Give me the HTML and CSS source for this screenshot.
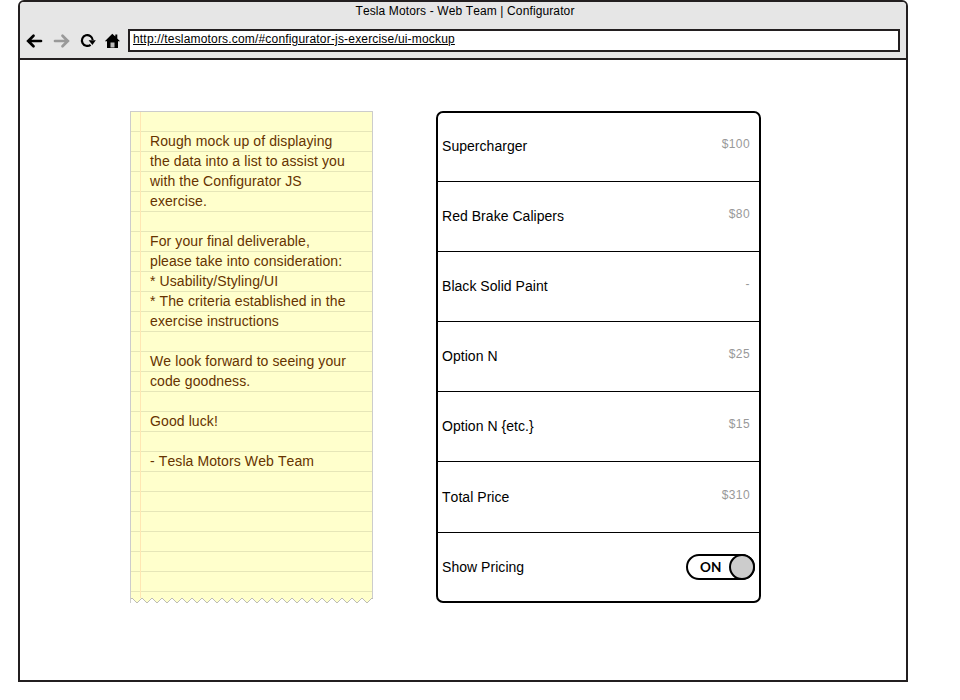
FILE: index.html
```
<!DOCTYPE html>
<html lang="en">
<head>
<meta charset="utf-8">
<title>Tesla Motors - Web Team | Configurator</title>
<link rel="stylesheet" href="styles.css">
</head>
<body>
<div class="window">
  <header class="chrome">
    <div class="title">Tesla Motors - Web Team | Configurator</div>
    <div class="toolbar">
      <svg class="nav" width="104" height="23" viewBox="0 0 104 23" fill="none" stroke-linecap="round">
        <path d="M13.500 6.800 8.200 12l5.300 5.200M8.500 12H21" stroke="#000" stroke-width="2.700"/>
        <path d="M42.500 6.800 47.800 12l-5.300 5.200M35 12h12.500" stroke="#999" stroke-width="2.700"/>
        <path d="M70.600 15.800A5.400 5.400 0 1 1 72.700 11" stroke="#000" stroke-width="2.200" stroke-linecap="butt"/>
        <path d="M68.600 11.300h7.200l-3.400 4.700z" fill="#000"/>
        <path d="M84.800 12.300 92.300 4.800l3 2.600V5.500h2v4l2.700 2.800h-2V19H87v-6.700z" fill="#000"/>
        <path d="M90.500 13.500h4v5h-4z" fill="#bbb"/>
      </svg>
      <div class="address"><span>http://teslamotors.com/#configurator-js-exercise/ui-mockup</span></div>
    </div>
  </header>
  <main class="content">
    <section class="note">
      <div class="paper">
        <p>Rough mock up of displaying<br>the data into a list to assist you<br>with the Configurator JS<br>exercise.</p>
        <p>For your final deliverable,<br>please take into consideration:<br>* Usability/Styling/UI<br>* The criteria established in the<br>exercise instructions</p>
        <p>We look forward to seeing your<br>code goodness.</p>
        <p>Good luck!</p>
        <p>- Tesla Motors Web Team</p>
      </div>
      <svg class="tear" width="243" height="6" viewBox="0 0 243 6">
        <defs>
          <pattern id="teeth" x="2" width="10" height="6" patternUnits="userSpaceOnUse">
            <path d="M0 0 5 5 10 0z" fill="#ffffcc"/>
            <path d="M0 0 5 5 10 0" fill="none" stroke="#bdbdb5" stroke-width="1"/>
          </pattern>
        </defs>
        <rect width="243" height="6" fill="url(#teeth)"/>
        <path d="M.5 0v5" stroke="#ccc"/>
      </svg>
    </section>
    <ul class="options">
      <li><span>Supercharger</span><span class="price">$100</span></li>
      <li><span>Red Brake Calipers</span><span class="price">$80</span></li>
      <li><span>Black Solid Paint</span><span class="price">-</span></li>
      <li><span>Option N</span><span class="price">$25</span></li>
      <li><span>Option N {etc.}</span><span class="price">$15</span></li>
      <li class="total"><span>Total Price</span><span class="price">$310</span></li>
      <li><span>Show Pricing</span><span class="toggle">ON<i class="knob"></i></span></li>
    </ul>
  </main>
</div>
</body>
</html>
```

FILE: styles.css
```
* { box-sizing: border-box; }
body {
  margin: 0;
  background: #fff;
  color: #000;
  font-family: "Liberation Sans", Arial, sans-serif;
  font-kerning: none;
}
.window {
  width: 890px;
  height: 682px;
  margin-left: 18px;
  border: 2px solid #231f20;
  border-radius: 6px 6px 0 0;
  overflow: hidden;
}
.chrome {
  height: 58px;
  background: #e6e6e6;
  border-bottom: 2px solid #231f20;
}
.title {
  height: 27px;
  padding-left: 4px;
  font-size: 12px;
  line-height: 18px;
  letter-spacing: 0.12px;
  text-align: center;
}
.toolbar {
  display: flex;
  padding-right: 6px;
}
.nav { margin-right: 4px; flex: none; }
.address {
  flex: 1;
  height: 23px;
  padding-left: 3px;
  background: #fff;
  border: 2px solid #231f20;
  font-size: 12px;
  line-height: 17px;
  letter-spacing: 0.18px;
  text-decoration: underline;
}
.content {
  display: flex;
  align-items: flex-start;
  gap: 63px;
  padding: 51px 0 0 110px;
}
.note { width: 243px; }
.paper {
  height: 487px;
  padding: 19px 0 0 19px;
  color: #663300;
  font-size: 14px;
  line-height: 20px;
  letter-spacing: 0.1px;
  border: 1px solid #ccc;
  border-bottom: 0;
  background:
    linear-gradient(#ffe6b3, #ffe6b3) 9px 0 / 1px 100% no-repeat,
    repeating-linear-gradient(#ffffcc 0 19px, #e6e6b8 19px 20px);
}
.paper p { margin: 0 0 20px; white-space: nowrap; }
.tear { display: block; }
.options {
  width: 325px;
  height: 492px;
  margin: 0;
  padding: 0;
  list-style: none;
  border: 2px solid #000;
  border-radius: 7px;
  font-size: 14px;
  letter-spacing: 0.04px;
}
.options li {
  display: flex;
  align-items: center;
  justify-content: space-between;
  height: 70px;
  padding: 0 4px 2px;
  border-bottom: 1px solid #000;
}
.options li:first-child { height: 69px; }
.options li.total { height: 71px; padding-bottom: 0; }
.options li:last-child { border-bottom: 0; height: 69px; }
.price {
  padding: 0 5px 4px 0;
  color: #999;
  font-size: 12px;
  letter-spacing: 0.4px;
}
.toggle {
  display: flex;
  align-items: center;
  justify-content: space-between;
  width: 69px;
  height: 26px;
  padding-left: 12px;
  border: 2px solid #000;
  border-radius: 13px;
  font-family: Lato, sans-serif;
  font-size: 13.5px;
  font-weight: 700;
}
.knob {
  width: 26px;
  height: 26px;
  margin-right: -2px;
  background: #ccc;
  border: 2px solid #000;
  border-radius: 50%;
}
```
